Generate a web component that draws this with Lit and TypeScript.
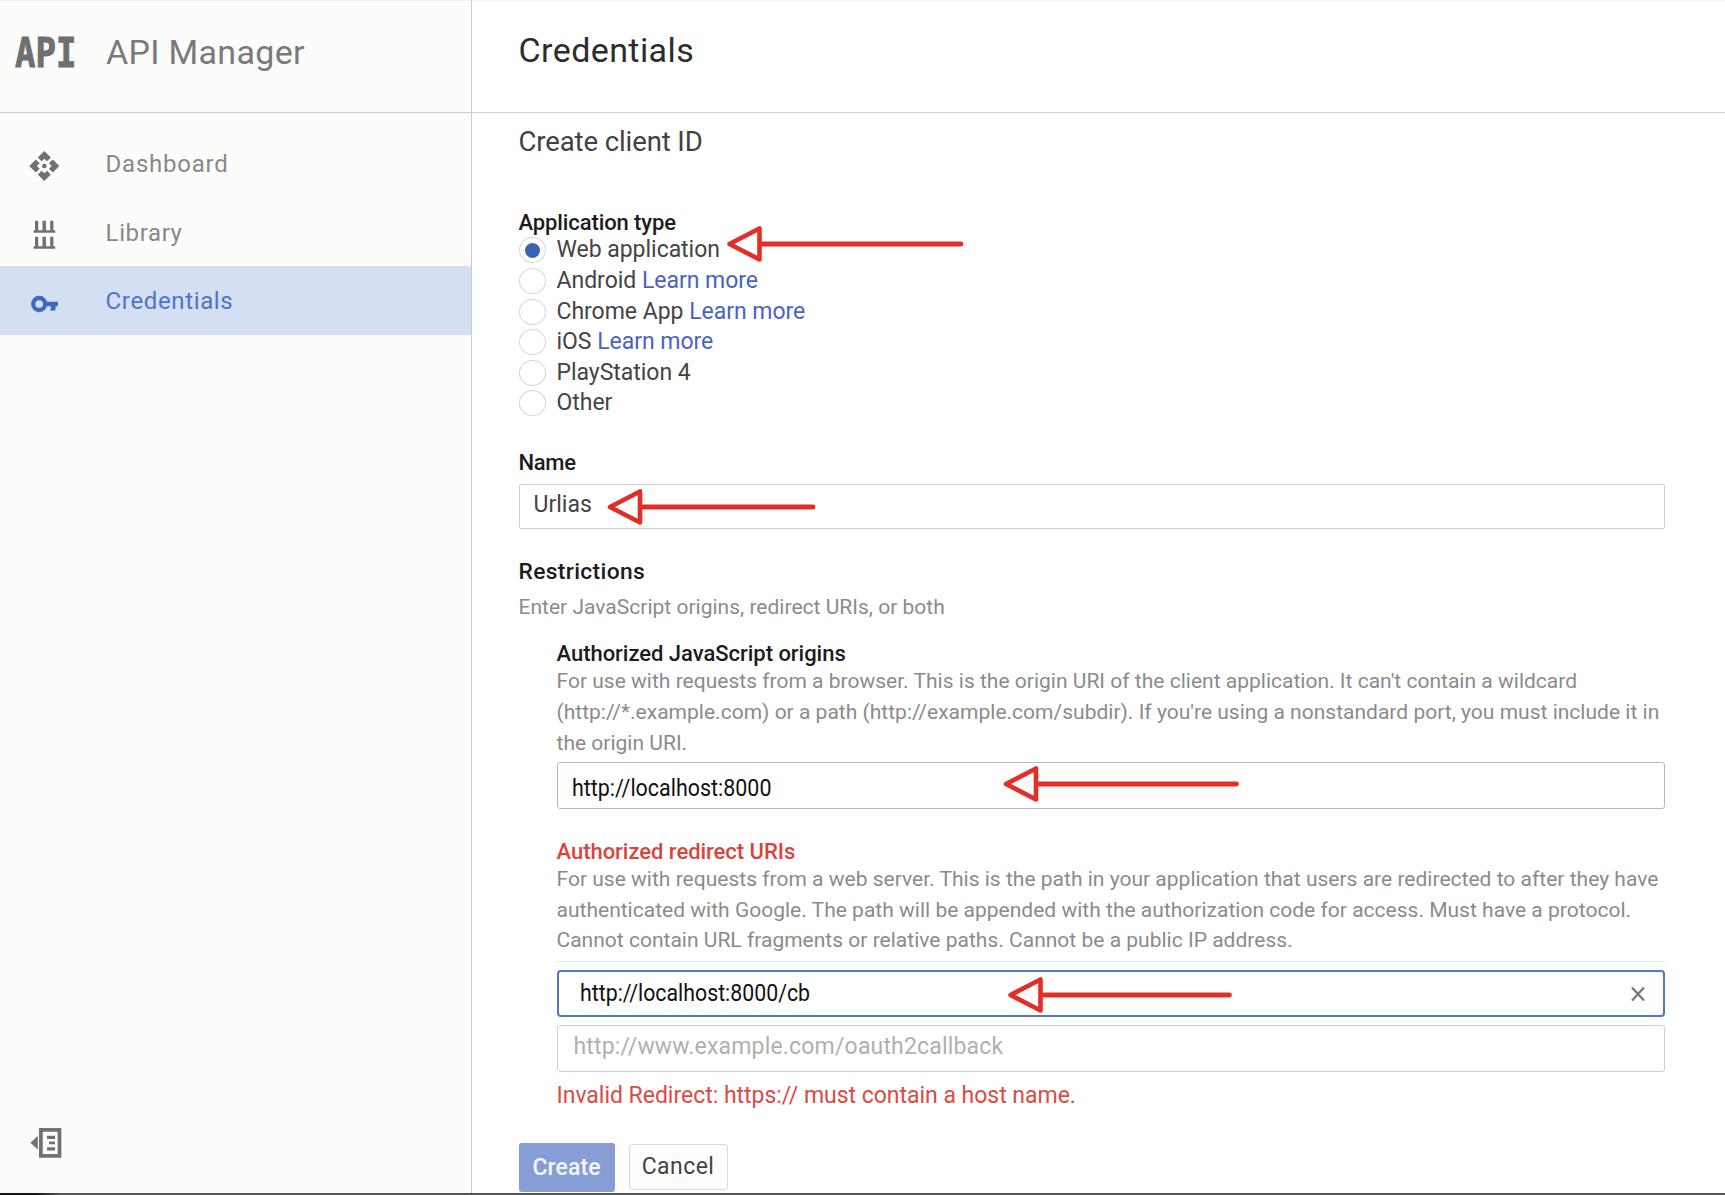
import { LitElement, html, css, svg, nothing } from "lit";
import { customElement } from "lit/decorators.js";
import { classMap } from "lit/directives/class-map.js";

const dashboardIcon = svg`<svg class="icon" width="60" height="32" viewBox="0 0 60 32">
  <g transform="translate(29.3 1) scale(1.3636) translate(-1 -1)" fill="#707070">
    <path d="M12 1 7.2 5.8 10 8.6 12 6.6l2 2 2.8-2.8zM1 12l4.8 4.8L8.6 14l-2-2 2-2-2.8-2.8zM23 12l-4.800-4.800L15.400 10l2 2-2 2 2.800 2.800zM12 23l4.800-4.800L14 15.400l-2 2-2-2-2.800 2.800z"/>
    <circle cx="12" cy="12" r="1.700"/>
  </g>
</svg>`;

const libraryIcon = svg`<svg class="icon" width="60" height="32" viewBox="0 0 60 32">
  <g fill="#707070">
    <path d="M35 1.700h3.200v9.600h4.300v-9.600h3.400v9.600h4.300v-9.600h3.200v9.600h1.800v2.400H33.500v-2.400H35z"/>
    <path d="M35 17.700h3.200v9.600h4.300v-9.600h3.400v9.600h4.300v-9.600h3.200v9.600h1.800v2.400H33.500v-2.400H35z"/>
  </g>
</svg>`;

const keyIcon = svg`<svg class="icon" width="60" height="32" viewBox="0 0 60 32">
  <circle cx="39.200" cy="16" r="6" fill="none" stroke="#4169bb" stroke-width="4.300"/>
  <path d="M45 13.700h13v4.600h-2.200l-.6 4.200h-5l.8-4.200H45z" fill="#4169bb"/>
</svg>`;

const navItems = [
  { label: "Dashboard", icon: dashboardIcon, cls: "dashboard" },
  { label: "Library", icon: libraryIcon, cls: "library" },
  { label: "Credentials", icon: keyIcon, cls: "selected" },
];

const appTypes = [
  { label: "Web application", checked: true },
  { label: "Android", link: true },
  { label: "Chrome App", link: true },
  { label: "iOS", link: true },
  { label: "PlayStation 4" },
  { label: "Other" },
];

/* Tip x, centre y and tail x of each callout arrow. */
const arrows = [
  [729.5, 244, 961],
  [610, 507, 813],
  [1006, 784, 1236.5],
  [1010.5, 995, 1229.5],
];

@customElement("app-root")
class AppRoot extends LitElement {
  static styles = css`
    :host { display: block; font-family: Roboto, sans-serif; color: #444; }
    * { box-sizing: border-box; }
    .page { position: relative; display: flex; width: 1725px; height: 1195px; overflow: hidden; background: #fff; }
    .edge { position: absolute; left: 0; right: 0; bottom: 0; height: 2px; background: linear-gradient(90deg, #111 0, #111 35px, #555 60px); }
    .sidebar { display: flex; flex-direction: column; flex: none; width: 472px; background: #fcfcfb; border-right: 1px solid #cbcbcb; box-shadow: inset 0 1px #f1f1f0; }
    .brand { display: flex; align-items: flex-start; height: 113px; padding-top: 32px; border-bottom: 1px solid #cdcdcd; }
    .logo { width: 91px; margin-left: 15px; padding-top: 1px; font: bold 41px/40px "DejaVu Sans Mono", monospace; color: #6f6f6f; -webkit-text-stroke: 1px #6f6f6f; white-space: nowrap; transform: scaleX(.83); transform-origin: 0 0; }
    .brandname { font-size: 34px; line-height: 40px; letter-spacing: .31px; color: #7a7a7a; }
    .nav { display: flex; flex-direction: column; padding-top: 16px; flex: 1; }
    .item { display: flex; align-items: center; height: 68.700px; font-size: 24px; letter-spacing: .75px; color: #888; }
    .item .icon { flex: none; margin-right: 45.600px; margin-top: 5px; }
    .item span { padding-top: 1px; }
    .library { letter-spacing: .62px; }
    .selected { background: #d4dff3; color: #5074c6; letter-spacing: .64px; }
    .selected .icon { margin-top: 7px; }
    .collapse { margin: 0 0 35px 29.500px; }
    .main { flex: 1; min-width: 0; }
    .header { height: 113px; padding: 30px 0 0 46.500px; border-bottom: 1px solid #d2d2d2; box-shadow: inset 0 1px #f6f6f6; }
    .title { font-size: 34px; line-height: 40px; letter-spacing: .42px; color: #2c2c2c; }
    .form { padding: 14px 60px 0 46.500px; }
    .sub { font-size: 27.500px; line-height: 30px; color: #424242; letter-spacing: -.1px; }
    .label { font-size: 22px; line-height: 27px; font-weight: 500; color: #1c1c1c; letter-spacing: -.03px; }
    .type { margin-top: 52px; letter-spacing: -.1px; }
    .radio { display: flex; align-items: center; height: 30.640px; font-size: 23px; letter-spacing: -.03px; }
    .radio > span:last-child { padding-bottom: 1px; }
    .type + .radio { margin-top: -1px; }
    .ring { display: flex; align-items: center; justify-content: center; width: 27px; height: 26px; margin-right: 11px; border: 1.500px solid #d6d6d6; border-radius: 50%; }
    .dot { width: 15px; height: 15px; border-radius: 50%; background: #3b62b4; }
    .link { color: #4a62c3; }
    .name { margin-top: 30px; letter-spacing: -.3px; }
    .input { display: flex; align-items: center; height: 46px; border: 1.500px solid #cfcfcf; border-radius: 2px; font-size: 23px; padding-left: 14px; }
    .username { height: 45px; margin-top: 8px; padding-bottom: 3px; color: #444; }
    .restrict { margin-top: 29px; font-size: 22.800px; letter-spacing: .35px; }
    .hint { font-size: 21px; line-height: 30.600px; color: #8b8b8b; letter-spacing: .012px; }
    .enter { margin-top: 7px; }
    .group { padding-left: 38px; }
    .origins { margin-top: 18px; }
    .origins + .hint { margin-top: -1px; }
    .line { white-space: nowrap; }
    .origin { height: 47px; margin-top: 4px; padding-top: 5px; border-color: #b9b9b9; border-radius: 3px; color: #111; }
    .typed { transform: scaleX(.932); transform-origin: 0 0; }
    .redirects { margin-top: 29px; color: #da443d; }
    .redirects + .hint { margin-top: -1px; }
    .rule { height: 1px; margin-top: 5px; background: #e4e4e4; }
    .focused { height: 47px; margin-top: 8px; padding: 1px 18px 0 21px; justify-content: space-between; border: 2px solid #5277c5; border-radius: 4px; color: #111; }
    .focused .typed { transform: scaleX(.926); }
    .empty { height: 47px; margin-top: 8px; padding: 0 0 4px 16px; color: #b0b0b0; letter-spacing: .175px; border-radius: 3px; }
    .error { margin-top: 10px; font-size: 23px; line-height: 27px; color: #dc4a44; letter-spacing: -.025px; }
    .actions { display: flex; align-items: center; gap: 14px; margin-top: 34px; }
    .create { display: flex; align-items: center; justify-content: center; width: 96px; height: 49px; border-radius: 3px; background: #869dd6; color: #f3f6fd; font-size: 23px; font-weight: 500; letter-spacing: .1px; }
    .cancel { display: flex; align-items: center; justify-content: center; width: 99px; height: 46px; border: 1.500px solid #d9d9d9; border-radius: 3px; background: #fdfdfd; color: #444; font-size: 23px; letter-spacing: .45px; padding-bottom: 2px; }
    .arrows { position: absolute; left: 0; top: 0; pointer-events: none; }
  `;

  render() {
    return html`<div class="page">
      <div class="sidebar">
        <div class="brand"><div class="logo">API</div><div class="brandname">API Manager</div></div>
        <div class="nav">
          ${navItems.map((n) => html`<div class=${classMap({ item: true, [n.cls]: true })}>${n.icon}<span>${n.label}</span></div>`)}
        </div>
        <svg class="collapse" width="34" height="34" viewBox="0 0 34 34">
          <path d="M.5 16.700 7.800 10v13.500z" fill="#707070"/>
          <rect x="10.900" y="3.900" width="18.600" height="26" fill="none" stroke="#707070" stroke-width="3.700"/>
          <path d="M17 9.700h8v3.200h-8zM19 15.500h6v2.800h-6zM17 21.300h8v3.200h-8z" fill="#707070"/>
        </svg>
      </div>
      <div class="main">
        <div class="header"><div class="title">Credentials</div></div>
        <div class="form">
          <div class="sub">Create client ID</div>
          <div class="label type">Application type</div>
          ${appTypes.map((t) => html`<div class="radio"><span class="ring">${t.checked ? html`<span class="dot"></span>` : nothing}</span><span>${t.label}${t.link ? html` <span class="link">Learn more</span>` : nothing}</span></div>`)}
          <div class="label name">Name</div>
          <div class="input username">Urlias</div>
          <div class="label restrict">Restrictions</div>
          <div class="hint enter">Enter JavaScript origins, redirect URIs, or both</div>
          <div class="group">
            <div class="label origins">Authorized JavaScript origins</div>
            <div class="hint">
              <div class="line">For use with requests from a browser. This is the origin URI of the client application. It can't contain a wildcard</div>
              <div class="line">(http://*.example.com) or a path (http://example.com/subdir). If you're using a nonstandard port, you must include it in</div>
              <div class="line">the origin URI.</div>
            </div>
            <div class="input origin"><span class="typed">http://localhost:8000</span></div>
            <div class="label redirects">Authorized redirect URIs</div>
            <div class="hint">
              <div class="line">For use with requests from a web server. This is the path in your application that users are redirected to after they have</div>
              <div class="line">authenticated with Google. The path will be appended with the authorization code for access. Must have a protocol.</div>
              <div class="line">Cannot contain URL fragments or relative paths. Cannot be a public IP address.</div>
            </div>
            <div class="rule"></div>
            <div class="input focused"><span class="typed">http://localhost:8000/cb</span>
              <svg width="14" height="16" viewBox="0 0 14 16"><path d="M1 1.500 13 14.500M13 1.500 1 14.500" stroke="#777" stroke-width="2.300" fill="none"/></svg>
            </div>
            <div class="input empty">http://www.example.com/oauth2callback</div>
            <div class="error">Invalid Redirect: https:// must contain a host name.</div>
          </div>
          <div class="actions"><div class="create">Create</div><div class="cancel">Cancel</div></div>
        </div>
      </div>
      <svg class="arrows" width="1725" height="1195" viewBox="0 0 1725 1195" fill="none" stroke="#e32d27" stroke-linejoin="round" stroke-linecap="round">
        ${arrows.map(([x, y, end]) => svg`<path stroke-width="4.600" d="M${x} ${y}l30-15.500v31z"/><path stroke-width="4.800" d="M${x + 31} ${y}H${end}"/>`)}
      </svg>
      <div class="edge"></div>
    </div>`;
  }
}
